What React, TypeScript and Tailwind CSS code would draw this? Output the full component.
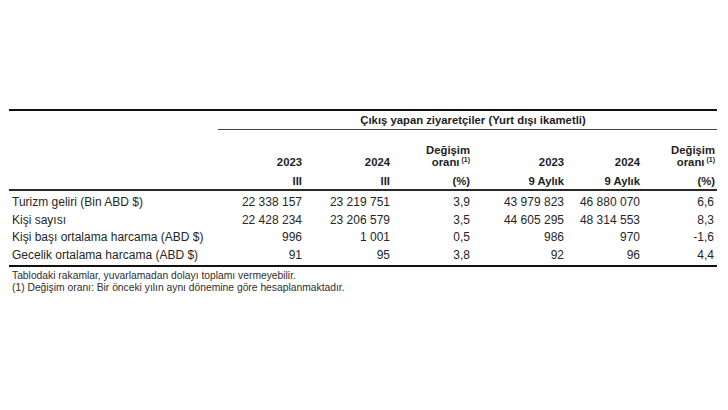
const cols = "grid grid-cols-[209px_84px_88px_80px_94px_76px_77px]";

const rows: { label: string; v: string[]; h: string }[] = [
  { label: "Turizm geliri (Bin ABD $)", v: ["22 338 157", "23 219 751", "3,9", "43 979 823", "46 880 070", "6,6"], h: "h-[19px] leading-[18px]" },
  { label: "Kişi sayısı", v: ["22 428 234", "23 206 579", "3,5", "44 605 295", "48 314 553", "8,3"], h: "h-[17px] leading-[17px]" },
  { label: "Kişi başı ortalama harcama (ABD $)", v: ["996", "1 001", "0,5", "986", "970", "-1,6"], h: "h-[17px] leading-[17px]" },
  { label: "Gecelik ortalama harcama (ABD $)", v: ["91", "95", "3,8", "92", "96", "4,4"], h: "h-[19px] leading-[18px]" },
];

function Sup() {
  return <span className="relative -top-[4px] ml-[2px] text-[7px]">(1)</span>;
}

function YearHead({ year, sub }: { year: string; sub: string }) {
  return (
    <div className="flex flex-col items-end justify-end pb-[2px]">
      <div className="h-[12px] leading-[12px]">{year}</div>
      <div className="mt-[7px] h-[12px] leading-[12px]">{sub}</div>
    </div>
  );
}

function RateHead({ last }: { last?: boolean }) {
  return (
    <div className={`flex flex-col items-end justify-end pb-[2px] ${last ? "pr-[2px]" : ""}`}>
      <div className="h-[12px] leading-[12px]">Değişim</div>
      <div className="h-[12px] leading-[12px]">
        oranı
        <Sup />
      </div>
      <div className="mt-[7px] h-[12px] leading-[12px]">(%)</div>
    </div>
  );
}

export default function App() {
  return (
    <div
      className="h-[410px] w-[728px] bg-white pl-[9px] pt-[109px] text-[11.3px] text-[#1e1e1e]"
      style={{ fontFamily: '"Liberation Sans", Arial, sans-serif' }}
    >
      <div className="w-[708px]">
        {/* title row */}
        <div className={`${cols} border-t-2 border-[#111]`}>
          <div />
          <div className="col-span-6 border-b border-[#444] pl-[11px] text-center font-bold h-[19px] leading-[19px]">
            Çıkış yapan ziyaretçiler (Yurt dışı ikametli)
          </div>
        </div>

        {/* column heads */}
        <div className={`${cols} h-[61px] border-b-2 border-[#2a2a2a] font-bold`}>
          <div />
          <YearHead year="2023" sub="III" />
          <YearHead year="2024" sub="III" />
          <RateHead />
          <YearHead year="2023" sub="9 Aylık" />
          <YearHead year="2024" sub="9 Aylık" />
          <RateHead last />
        </div>

        {/* data */}
        <div className="border-b-2 border-[#111] pt-[2px] text-[12px] text-[#262626]">
          {rows.map((r) => (
            <div key={r.label} className={`${cols} ${r.h}`}>
              <div className="pl-[3px] whitespace-nowrap">{r.label}</div>
              {r.v.map((v, i) => (
                <div key={i} className={`text-right whitespace-nowrap ${i === 5 ? "pr-[3px]" : ""}`}>
                  {v}
                </div>
              ))}
            </div>
          ))}
        </div>

        <div className="pl-[3px] pt-[3px] text-[10.3px] leading-[12px] text-[#2e2e2e]">
          <div>Tablodaki rakamlar, yuvarlamadan dolayı toplamı vermeyebilir.</div>
          <div>(1) Değişim oranı: Bir önceki yılın aynı dönemine göre hesaplanmaktadır.</div>
        </div>
      </div>
    </div>
  );
}
